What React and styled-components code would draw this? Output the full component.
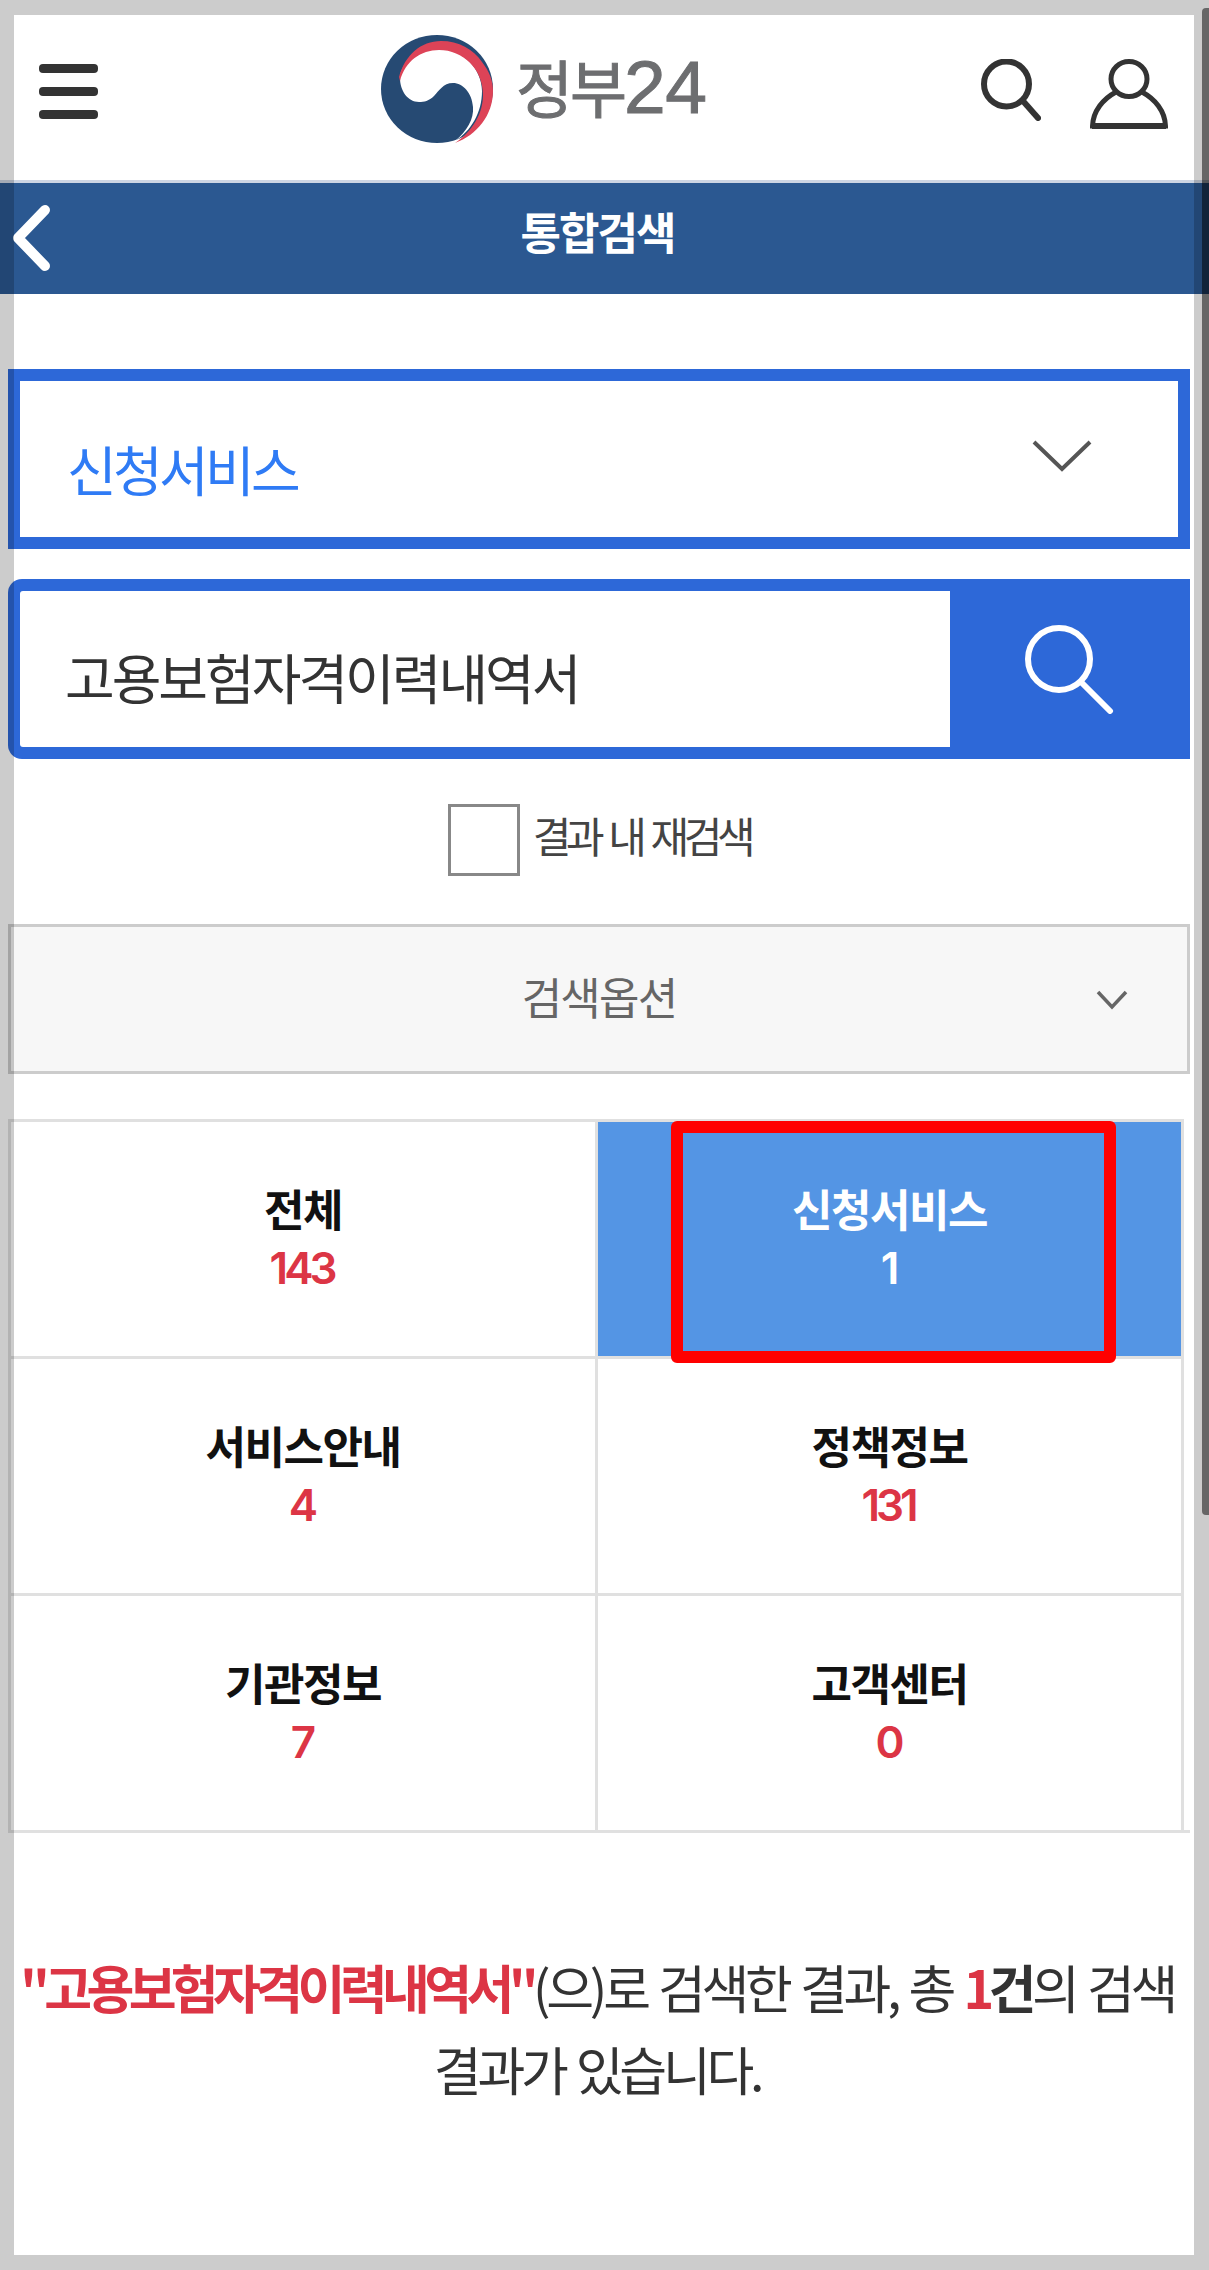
import React from 'react'
import styled, { createGlobalStyle } from 'styled-components'

const GlobalStyle = createGlobalStyle`
  html, body {
    margin: 0;
    padding: 0;
    background: #fff;
  }
  body {
    font-family: "Noto Sans CJK KR", "Noto Sans", sans-serif;
  }
  * {
    box-sizing: border-box;
  }
`

const Page = styled.div`
  position: relative;
  width: 1209px;
  height: 2270px;
  overflow: hidden;
  background: #fff;
  padding-top: 15px;
`

// translucent grey frame that sits over the captured page
const Frame = styled.div`
  position: absolute;
  inset: 0;
  border-style: solid;
  border-color: rgba(0, 0, 0, 0.2);
  border-width: 15px 15px 15px 14px;
  pointer-events: none;
  z-index: 5;
`

const ScrollThumb = styled.div`
  position: absolute;
  top: 8px;
  right: 0;
  width: 7px;
  height: 1507px;
  border-radius: 4px 0 0 4px;
  background: rgba(0, 0, 0, 0.5);
  z-index: 6;
`

const Header = styled.header`
  display: flex;
  align-items: flex-start;
  height: 165px;
`

const Hamburger = styled.div`
  display: flex;
  flex-direction: column;
  gap: 14px;
  width: 59px;
  margin: 49px 0 0 39px;

  span {
    display: block;
    height: 9px;
    border-radius: 4px;
    background: #333;
  }
`

const Logo = styled.div`
  display: flex;
  align-items: center;
  gap: 23px;
  width: 327px;
  margin: 20px 0 0 283px;
`

const LogoText = styled.span`
  font-size: 62px;
  line-height: 108px;
  color: #6d6e70;
  letter-spacing: -3px;
  white-space: nowrap;
  margin-top: -6px;
  -webkit-text-stroke: 1px #6d6e70;

  b {
    font-family: "Liberation Sans", sans-serif;
    font-weight: 400;
    font-size: 75px;
    letter-spacing: -0.5px;
  }
`

const HeaderIcons = styled.div`
  display: flex;
  align-items: flex-start;
  gap: 49px;
  margin: 44px 0 0 273px;
`

const TitleBar = styled.div`
  display: flex;
  align-items: center;
  justify-content: center;
  height: 114px;
  padding: 0 14px 16px 0;
  border-top: 3px solid #cdd5e3;
  background: #2b5891;
  position: relative;
`

const Title = styled.h1`
  margin: 0;
  font-size: 44px;
  line-height: 50px;
  font-weight: 700;
  color: #fff;
  letter-spacing: -2px;
`

const BackIcon = styled.svg`
  position: absolute;
  left: 9px;
  top: 21px;
`

const Content = styled.main`
  padding: 75px 19px 0 8px;
`

const SelectBox = styled.div`
  display: flex;
  align-items: center;
  justify-content: space-between;
  height: 180px;
  padding: 0 86px 0 47px;
  border: 12px solid #2d68d8;
  background: #fff;

  svg {
    margin-top: -6px;
  }
`

const SelectText = styled.span`
  font-size: 54px;
  line-height: 60px;
  color: #2f7bf5;
  letter-spacing: -3.7px;
  margin-top: 20px;
`

const SearchBox = styled.div`
  display: flex;
  height: 180px;
  margin-top: 30px;
  border: 12px solid #2d68d8;
  border-right: 0;
  border-radius: 14px 0 0 14px;
  background: #2d68d8;
`

const SearchField = styled.div`
  display: flex;
  align-items: center;
  width: 930px;
  padding: 0 0 0 45px;
  background: #fff;
  border-radius: 3px 0 0 3px;
`

const SearchValue = styled.span`
  font-size: 54px;
  line-height: 60px;
  color: #333;
  letter-spacing: -3px;
  margin-top: 16px;
`

const SearchButton = styled.div`
  flex: 1;
  display: flex;
  align-items: center;
  justify-content: center;
`

const CheckRow = styled.label`
  display: flex;
  align-items: flex-start;
  justify-content: center;
  gap: 13px;
  height: 72px;
  margin-top: 45px;
`

const CheckBox = styled.span`
  display: block;
  width: 72px;
  height: 72px;
  border: 3px solid #888;
  background: #fff;
`

const CheckLabel = styled.span`
  font-size: 42px;
  line-height: 62px;
  color: #444;
  letter-spacing: -5.4px;
  word-spacing: 5px;
`

const OptionBar = styled.div`
  position: relative;
  display: flex;
  align-items: center;
  justify-content: center;
  height: 150px;
  margin-top: 48px;
  padding-bottom: 6px;
  border: 3px solid #ccc;
  background: #f7f7f7;
`

const OptionText = styled.span`
  font-size: 44px;
  line-height: 50px;
  color: #666;
  letter-spacing: -1.8px;
`

const OptionChevron = styled.svg`
  position: absolute;
  right: 59px;
  top: 63px;
`

const CountBoard = styled.div`
  margin-top: 45px;
  border-bottom: 3px solid #e0e0e0;
`

const CountGrid = styled.div`
  display: grid;
  grid-template-columns: 587px 586px 3px;
  grid-auto-rows: 237px;
  width: 1176px;
`

const CountCell = styled.div`
  position: relative;
  display: flex;
  flex-direction: column;
  align-items: center;
  justify-content: center;
  padding-bottom: 4px;
  border-top: 3px solid #e0e0e0;
  border-left: 3px solid #e0e0e0;
  background: ${props => (props.$active ? '#5495e4' : '#fff')};
`

const RightEdge = styled.div`
  background: #e0e0e0;
`

const CellName = styled.span`
  font-size: 44px;
  line-height: 62px;
  font-weight: 700;
  letter-spacing: -1.5px;
  color: ${props => (props.$active ? '#fff' : '#111')};
`

const CellCount = styled.span`
  font-family: Inter, sans-serif;
  font-size: 44px;
  line-height: 58px;
  font-weight: 600;
  letter-spacing: -4px;
  padding-right: 3px;
  color: ${props => (props.$active ? '#fff' : '#dc3545')};
`

const Highlight = styled.div`
  position: absolute;
  left: 73px;
  top: -1px;
  width: 445px;
  height: 242px;
  border: 12px solid #f00;
  border-radius: 6px;
  z-index: 2;
`

const Message = styled.p`
  margin: 113px 0 0;
  padding-right: 4px;
  font-size: 52px;
  line-height: 82px;
  text-align: center;
  color: #333;
  letter-spacing: -4.3px;
  word-spacing: 4px;
  white-space: nowrap;

  em {
    font-style: normal;
    font-weight: 700;
    color: #dc3545;
    letter-spacing: -5.6px;
  }
  strong {
    font-weight: 700;
  }
`

const cells = [
  { name: '전체', count: 143 },
  { name: '신청서비스', count: 1, active: true },
  { name: '서비스안내', count: 4 },
  { name: '정책정보', count: 131 },
  { name: '기관정보', count: 7 },
  { name: '고객센터', count: 0 }
]

function TaegeukMark () {
  return (
    <svg width="112" height="108" viewBox="0 0 112 108">
      <ellipse cx="56" cy="54" rx="56" ry="54" fill="#264a73" />
      <path d="M19 43C20 26 38 14 58 14C82 14 101 34 101 56C101 78 90 96 74 106C86 96 93 84 92 72C91 58 82 48 72 48C62 48 58 56 53 61C48 66 43 67 38 67C27 67 19 56 19 43Z" fill="#fff" />
      <path d="M18 42C24 20 40 6 60 6C78 6 92 14 101 27C108 36 112 45 112 56C112 80 96 100 74 108C92 96 102 78 102 60C102 34 82 15 58 15C40 15 24 26 19 46Z" fill="#dd4357" />
    </svg>
  )
}

export default function App () {
  return (
    <Page>
      <GlobalStyle />
      <Header>
        <Hamburger>
          <span />
          <span />
          <span />
        </Hamburger>
        <Logo>
          <TaegeukMark />
          <LogoText>정부<b>24</b></LogoText>
        </Logo>
        <HeaderIcons>
          <svg width="60" height="62" viewBox="0 0 60 62" fill="none" stroke="#333" strokeLinecap="round">
            <circle cx="25.500" cy="25" r="22.500" strokeWidth="6" />
            <path d="M42 42L57 59" strokeWidth="6" />
          </svg>
          <svg width="78" height="70" viewBox="0 0 78 70" fill="none" stroke="#333" strokeWidth="5">
            <ellipse cx="39" cy="20" rx="18" ry="17.500" />
            <path d="M26 33C13 40 3 52 2.500 67H75.500C75 52 65 40 52 33" />
            <path d="M2 67H76" strokeWidth="6" />
          </svg>
        </HeaderIcons>
      </Header>
      <TitleBar>
        <BackIcon width="44" height="68" viewBox="0 0 44 68" fill="none" stroke="#fff" strokeWidth="10" strokeLinecap="round" strokeLinejoin="round">
          <path d="M36 6L9 34L36 62" />
        </BackIcon>
        <Title>통합검색</Title>
      </TitleBar>
      <Content>
        <SelectBox>
          <SelectText>신청서비스</SelectText>
          <svg width="60" height="32" viewBox="0 0 60 32" fill="none" stroke="#555" strokeWidth="4">
            <path d="M2 2L30 29L58 2" />
          </svg>
        </SelectBox>
        <SearchBox>
          <SearchField>
            <SearchValue>고용보험자격이력내역서</SearchValue>
          </SearchField>
          <SearchButton>
            <svg width="90" height="90" viewBox="0 0 90 90" fill="none" stroke="#fff" strokeLinecap="round">
              <circle cx="34" cy="35" r="31" strokeWidth="6" />
              <path d="M56 58L85 87" strokeWidth="6" />
            </svg>
          </SearchButton>
        </SearchBox>
        <CheckRow>
          <CheckBox />
          <CheckLabel>결과 내 재검색</CheckLabel>
        </CheckRow>
        <OptionBar>
          <OptionText>검색옵션</OptionText>
          <OptionChevron width="32" height="20" viewBox="0 0 32 20" fill="none" stroke="#666" strokeWidth="3.500">
            <path d="M2 2L16 17L30 2" />
          </OptionChevron>
        </OptionBar>
        <CountBoard>
          <CountGrid>
            {cells.map((cell, i) => (
              <React.Fragment key={cell.name}>
                <CountCell $active={cell.active}>
                  <CellName $active={cell.active}>{cell.name}</CellName>
                  <CellCount $active={cell.active}>{cell.count}</CellCount>
                  {cell.active && <Highlight />}
                </CountCell>
                {i % 2 === 1 && <RightEdge />}
              </React.Fragment>
            ))}
          </CountGrid>
        </CountBoard>
        <Message>
          <em>"고용보험자격이력내역서"</em>(으)로 검색한 결과, 총 <em>1</em><strong>건</strong>의 검색<br />
          결과가 있습니다.
        </Message>
      </Content>
      <Frame />
      <ScrollThumb />
    </Page>
  )
}
